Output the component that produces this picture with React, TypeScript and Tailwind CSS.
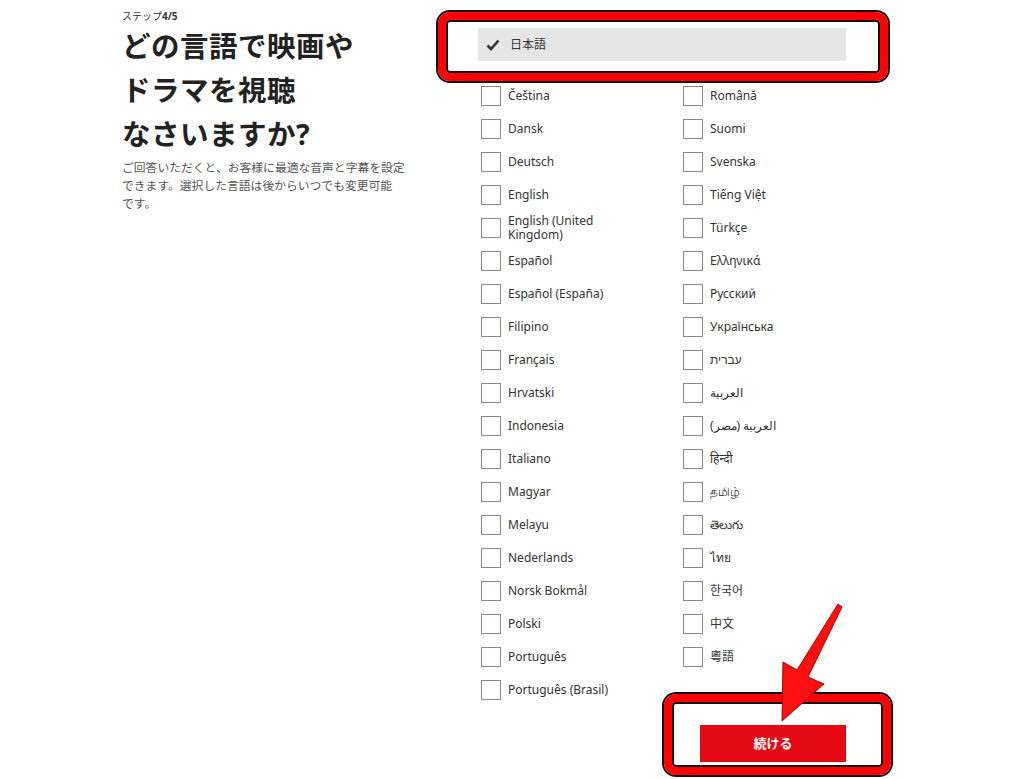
import React from "react";

const left = [
  "Čeština",
  "Dansk",
  "Deutsch",
  "English",
  "English (United Kingdom)",
  "Español",
  "Español (España)",
  "Filipino",
  "Français",
  "Hrvatski",
  "Indonesia",
  "Italiano",
  "Magyar",
  "Melayu",
  "Nederlands",
  "Norsk Bokmål",
  "Polski",
  "Português",
  "Português (Brasil)",
];

const right = [
  "Română",
  "Suomi",
  "Svenska",
  "Tiếng Việt",
  "Türkçe",
  "Ελληνικά",
  "Русский",
  "Українська",
  "עברית",
  "العربية",
  "العربية (مصر)",
  "हिन्दी",
  "தமிழ்",
  "తెలుగు",
  "ไทย",
  "한국어",
  "中文",
  "粵語",
];

function Row({ label }: { label: string }) {
  return (
    <div className="h-[33px] flex items-center gap-[7px]">
      <div className="w-[20px] h-[20px] shrink-0 border border-[#8a8a8a] bg-white" />
      <span className="text-[12px] leading-[14px] text-[#333] max-w-[110px]">{label}</span>
    </div>
  );
}

export default function App() {
  return (
    <div className="relative w-[1024px] h-[779px] bg-white overflow-hidden font-[Noto_Sans,Noto_Sans_CJK_JP,sans-serif]">
      <div className="flex">
        <div className="ml-[122px] w-[290px] pt-[9px]">
          <div className="text-[10px] leading-[14px] text-[#333]">
            ステップ<span className="font-bold">4/5</span>
          </div>
          <h1 className="mt-[1px] text-[28.5px] leading-[44px] font-bold text-[#222] tracking-[0.5px]">
            どの言語で映画や
            <br />
            ドラマを視聴
            <br />
            なさいますか?
          </h1>
          <p className="mt-[2px] text-[11.8px] leading-[18px] text-[#555] whitespace-nowrap">
            ご回答いただくと、お客様に最適な音声と字幕を設定
            <br />
            できます。選択した言語は後からいつでも変更可能
            <br />
            です。
          </p>
        </div>
        <div className="ml-[66px] w-[368px] pt-[28px]">
          <div className="h-[33px] bg-[#e6e6e6] flex items-center pl-[8px] gap-[10px]">
            <svg width="14" height="12" viewBox="0 0 14 12">
              <path d="M1.5 6.5 L5 10 L12.5 1.5" fill="none" stroke="#333" strokeWidth="2.6" />
            </svg>
            <span className="text-[12px] text-[#333]">日本語</span>
          </div>
          <div className="mt-[18px] pl-[3px] grid grid-cols-[202px_1fr]">
            <div className="flex flex-col">
              {left.map((l) => (
                <Row key={l} label={l} />
              ))}
            </div>
            <div className="flex flex-col">
              {right.map((l) => (
                <Row key={l} label={l} />
              ))}
            </div>
          </div>
          <div className="mt-[19px] flex justify-end">
            <button className="w-[146px] h-[37px] bg-[#e50914] text-white text-[13px] font-bold">
              続ける
            </button>
          </div>
        </div>
      </div>

      {/* annotation overlays */}
      <div className="absolute left-[438px] top-[12px] w-[450px] h-[69px] rounded-[12px] border-[8px] border-[#ff0000] shadow-[0_0_0_2px_#111,inset_0_0_0_2px_#111]" />
      <div className="absolute left-[664px] top-[694px] w-[227px] h-[81px] rounded-[12px] border-[8px] border-[#ff0000] shadow-[0_0_0_2px_#111,inset_0_0_0_2px_#111]" />
      <svg className="absolute left-0 top-0" width="1024" height="779" viewBox="0 0 1024 779">
        <polygon
          points="782,721 783,662 797,670 838,604 842,607 808,677 824,684"
          fill="#ff1010"
          stroke="#b00000"
          strokeWidth="1"
          strokeLinejoin="round"
        />
      </svg>
    </div>
  );
}
